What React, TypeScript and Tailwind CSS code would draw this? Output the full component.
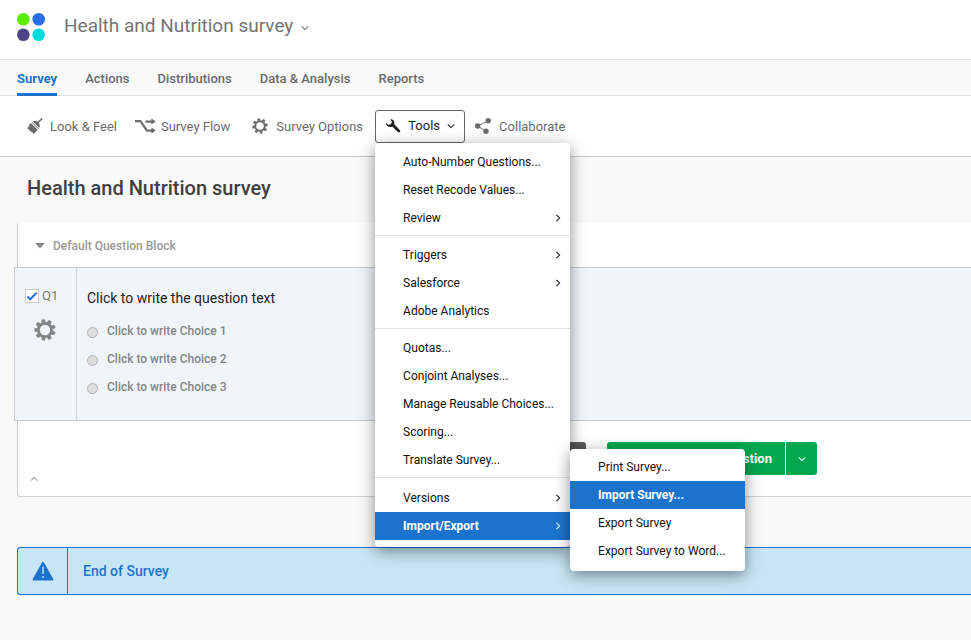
import type { ReactNode } from "react";

function Chevron({ dir, className = "" }: { dir: "down" | "up" | "right"; className?: string }) {
  const d = { down: "M1 3l4 4 4-4", up: "M1 7l4-4 4 4", right: "M3 1l4 4-4 4" }[dir];
  return (
    <svg viewBox="0 0 10 10" fill="none" stroke="currentColor" aria-hidden="true" className={`shrink-0 ${className}`}>
      <path d={d} strokeWidth="1.3" />
    </svg>
  );
}

function Gear({ teeth, className }: { teeth: number; className: string }) {
  const step = 360 / teeth;
  return (
    <svg viewBox="-12 -12 24 24" aria-hidden="true" className={`shrink-0 ${className}`}>
      <circle r="7.2" fill="none" stroke="currentColor" strokeWidth="3" />
      {Array.from({ length: teeth }, (_, i) => (
        <path key={i} d="M-2.4 -8L-1.7 -11.6H1.7L2.4 -8Z" fill="currentColor" transform={`rotate(${i * step - 10})`} />
      ))}
    </svg>
  );
}

function Logo() {
  return (
    <svg viewBox="0 0 28 28" aria-hidden="true" className="size-7 shrink-0">
      <circle cx="6.3" cy="6.3" r="6.3" fill="#5bee00" />
      <circle cx="21.7" cy="6.3" r="6.3" fill="#256fe0" />
      <circle cx="6.3" cy="21.7" r="6.3" fill="#4e4288" />
      <circle cx="21.7" cy="21.7" r="6.3" fill="#00dbe0" />
    </svg>
  );
}

function Brush() {
  return (
    <svg viewBox="0 0 16 16" aria-hidden="true" className="size-4 shrink-0">
      <path d="M14.6 1L10.6 5" stroke="currentColor" strokeWidth="1.7" strokeLinecap="round" />
      <path d="M5.8 3.4C7.5 2.5 9.9 2.8 11.4 4.4S13.2 8.3 12.2 10Z" fill="currentColor" />
      <path d="M5 4.4L11.4 10.8" stroke="currentColor" strokeWidth="1" />
      <path d="M4 5.2L10.8 12 6.6 15.9 5.4 14.3 4.4 14.7 4 12.9 2.4 13.1 2.2 11.4 0 10.2 2.6 7.8 1.6 7Z" fill="currentColor" />
    </svg>
  );
}

function Flow() {
  return (
    <svg viewBox="0 0 21 16" aria-hidden="true" className="h-4 w-[21px] shrink-0">
      <path d="M0 3.2H5.4L12 12.6H17M10.4 3.6H17" fill="none" stroke="currentColor" strokeWidth="2.2" />
      <path d="M16.4 .6L20.8 3.6 16.4 6.6ZM16.4 9.6L20.8 12.6 16.4 15.6Z" fill="currentColor" />
    </svg>
  );
}

function Wrench() {
  return (
    <svg viewBox="0 0 16 16" aria-hidden="true" className="size-4 shrink-0">
      <path
        d="M5.4 1.4C8.1 1 10 3.3 9.3 6.3L14.8 11.9A1.3 1.3 0 0 1 12.8 14L7.2 8.5C4.2 10 1 8.1 .8 4.8L2.9 6.5C4.6 7.3 7 5.4 6.9 3.8Z"
        fill="currentColor"
      />
    </svg>
  );
}

function Share() {
  return (
    <svg viewBox="0 0 16 16" aria-hidden="true" className="size-4 shrink-0">
      <path d="M13.2 2.8L2.7 8 11 13.2" fill="none" stroke="currentColor" strokeWidth=".9" />
      <g fill="currentColor">
        <circle cx="13.2" cy="2.8" r="2.7" />
        <circle cx="2.7" cy="8" r="2.7" />
        <circle cx="11" cy="13.2" r="2.7" />
      </g>
    </svg>
  );
}

function Warning() {
  return (
    <svg viewBox="0 0 22 20" aria-hidden="true" className="h-5 w-[22px]">
      <path d="M11 1.8L20.4 18.4H1.6Z" fill="#1b73ce" stroke="#1b73ce" strokeWidth="2" strokeLinejoin="round" />
      <path d="M11 5.5V13M11 15V17" stroke="#c7e6f5" strokeWidth="1.4" />
    </svg>
  );
}

function ToolButton({ icon, className, children }: { icon: ReactNode; className: string; children: ReactNode }) {
  return (
    <button type="button" className={`flex items-center whitespace-nowrap ${className}`}>
      {icon}
      <span className="pt-px">{children}</span>
    </button>
  );
}

function MenuItem({ label, active, arrow }: { label: string; active?: boolean; arrow?: boolean }) {
  return (
    <button
      type="button"
      role="menuitem"
      className={`flex h-7 w-full items-center justify-between whitespace-nowrap pr-2 pl-7 text-left text-[12px] ${
        active ? "bg-[#1b73ce] font-bold text-white" : "text-[#111]"
      }`}
    >
      {label}
      {arrow && <Chevron dir="right" className="size-2" />}
    </button>
  );
}

const groups = [
  [{ label: "Auto-Number Questions..." }, { label: "Reset Recode Values..." }, { label: "Review", arrow: true }],
  [{ label: "Triggers", arrow: true }, { label: "Salesforce", arrow: true }, { label: "Adobe Analytics" }],
  [
    { label: "Quotas..." },
    { label: "Conjoint Analyses..." },
    { label: "Manage Reusable Choices..." },
    { label: "Scoring..." },
    { label: "Translate Survey..." },
  ],
];

const panel = "rounded-[4px] bg-white shadow-[0_4px_16px_rgba(0,0,0,0.45)]";

function ToolsMenu() {
  return (
    <div role="menu" className={`absolute top-full left-0 z-10 w-[195px] pb-[5px] ${panel}`}>
      {groups.map((items, i) => (
        <div key={i} className="border-b border-[#e2e2e2] pt-[5px] pb-[3px]">
          {items.map((item) => (
            <MenuItem key={item.label} {...item} />
          ))}
        </div>
      ))}
      <div className="pt-[6px] pb-[2px]">
        <MenuItem label="Versions" arrow />
        <div className="relative">
          <MenuItem label="Import/Export" arrow active />
          <div role="menu" className={`absolute -bottom-[31px] left-full w-[175px] pt-1 pb-[6px] ${panel}`}>
            <MenuItem label="Print Survey..." />
            <MenuItem label="Import Survey..." active />
            <MenuItem label="Export Survey" />
            <MenuItem label="Export Survey to Word..." />
          </div>
        </div>
      </div>
    </div>
  );
}

export default function App() {
  return (
    <div className="min-h-screen overflow-hidden bg-[#f9f9f9] font-['Roboto','Liberation_Sans',sans-serif] text-[13px] text-[#6b6b6b]">
      <header className="flex h-[59px] items-center gap-[19px] bg-white px-[17px] pb-[6px]">
        <Logo />
        <button type="button" className="flex items-center gap-2 pb-px text-[19px] text-[#747474]">
          Health and Nutrition survey
          <Chevron dir="down" className="mt-1 size-2" />
        </button>
      </header>

      <nav className="flex h-[37px] gap-7 border-y border-[#e3e3e3] px-[17px] font-medium">
        <a href="#survey" className="-mb-px flex items-center border-b-3 border-[#1b73ce] pt-1 font-bold text-[#1b73ce]">
          Survey
        </a>
        {["Actions", "Distributions", "Data & Analysis", "Reports"].map((t) => (
          <a key={t} href="#tab" className="flex items-center pt-[2px]">
            {t}
          </a>
        ))}
      </nav>

      <div className="flex h-[61px] items-center border-b border-[#c8c8c8] bg-white pl-[27px]">
        <div className="flex items-center gap-[18px]">
          <ToolButton icon={<Brush />} className="gap-[7px]">
            Look &amp; Feel
          </ToolButton>
          <ToolButton icon={<Flow />} className="mr-1 gap-[5px]">
            Survey Flow
          </ToolButton>
          <ToolButton icon={<Gear teeth={8} className="size-4" />} className="gap-2">
            Survey Options
          </ToolButton>
        </div>
        <div className="relative ml-3">
          <button
            type="button"
            aria-expanded="true"
            className="flex h-[33px] w-[90px] items-center justify-between rounded-[3px] border border-[#666] bg-white px-[9px] text-[#222]"
          >
            <Wrench />
            Tools
            <Chevron dir="down" className="size-2" />
          </button>
          <ToolsMenu />
        </div>
        <div className="ml-[10px]">
          <ToolButton icon={<Share />} className="gap-2">
            Collaborate
          </ToolButton>
        </div>
      </div>

      <main className="pl-[17px]">
        <h1 className="flex h-[66px] items-center pb-1 pl-[10px] text-[20px] font-medium text-[#404040]">
          Health and Nutrition survey
        </h1>

        <section className="rounded-l-[3px] border-b border-l border-[#cfcfcf] bg-white">
          <button type="button" className="flex h-11 items-center gap-2 pt-px pl-[17px] text-[12px] font-medium text-[#999]">
            <svg viewBox="0 0 10 6" aria-hidden="true" className="h-[6px] w-[10px]">
              <path d="M0 0H10L5 5.5Z" fill="#8a8a8a" />
            </svg>
            Default Question Block
          </button>

          <div className="-ml-1 flex h-[154px] border-y border-l border-[#c9ccd0] bg-[#f1f5fa]">
            <div className="flex w-[62px] flex-col items-center gap-3 border-r border-[#d4d7da] pt-[18px]">
              <label className="flex items-center gap-[3px] self-start pl-[10px] text-[13px] leading-5 text-[#777]">
                <span className="relative flex">
                  <input type="checkbox" defaultChecked className="size-[14px] appearance-none border border-[#ccc] bg-white" />
                  <svg viewBox="0 0 14 14" aria-hidden="true" className="pointer-events-none absolute inset-0">
                    <path d="M2.5 7.5L5.2 10.3 11.8 3.6" fill="none" stroke="#1b73ce" strokeWidth="2" />
                  </svg>
                </span>
                Q1
              </label>
              <button type="button" aria-label="Question options" className="mr-px pt-px text-[#858585]">
                <Gear teeth={9} className="size-[22px]" />
              </button>
            </div>
            <fieldset className="pt-5 pl-[10px]">
              <legend className="float-left mb-3 text-[14px] leading-5 text-[#222]">Click to write the question text</legend>
              <div className="clear-both flex flex-col">
                {[1, 2, 3].map((n) => (
                  <label key={n} className="flex h-7 items-center gap-[9px] pb-[6px] text-[12px] font-medium text-[#858585]">
                    <input
                      type="radio"
                      name="q1"
                      className="mt-[3px] size-[11px] appearance-none rounded-full border border-[#b2b2b2] bg-[#dedede]"
                    />
                    Click to write Choice {n}
                  </label>
                ))}
              </div>
            </fieldset>
          </div>

          <div className="flex h-[75px] items-start justify-between">
            <button type="button" aria-label="Collapse block" className="mt-[54px] ml-3 text-[#999]">
              <Chevron dir="up" className="size-2" />
            </button>
            <div className="mt-[21px] mr-[154px] flex gap-[21px] font-bold text-white">
              <button type="button" aria-label="Import Questions" className="h-[33px] w-[178px] rounded-[3px] bg-[#5c5c5c]" />
              <div className="flex">
                <button type="button" className="h-[33px] w-[178px] rounded-l-[3px] bg-[#00a850] pr-[13px] text-right">
                  Create a New Question
                </button>
                <button
                  type="button"
                  aria-label="Question types"
                  className="flex h-[33px] w-8 items-center justify-center rounded-r-[3px] border-l border-white bg-[#00a850]"
                >
                  <Chevron dir="down" className="size-2" />
                </button>
              </div>
            </div>
          </div>
        </section>

        <section className="mt-[50px] flex h-12 rounded-l-[3px] border-y border-l border-[#1b73ce] bg-[#c7e6f5]">
          <div className="flex w-[50px] items-center justify-center border-r border-[#1b73ce]">
            <Warning />
          </div>
          <h2 className="flex items-center pl-[15px] text-[14px] font-medium text-[#1b73ce]">End of Survey</h2>
        </section>
      </main>
    </div>
  );
}
